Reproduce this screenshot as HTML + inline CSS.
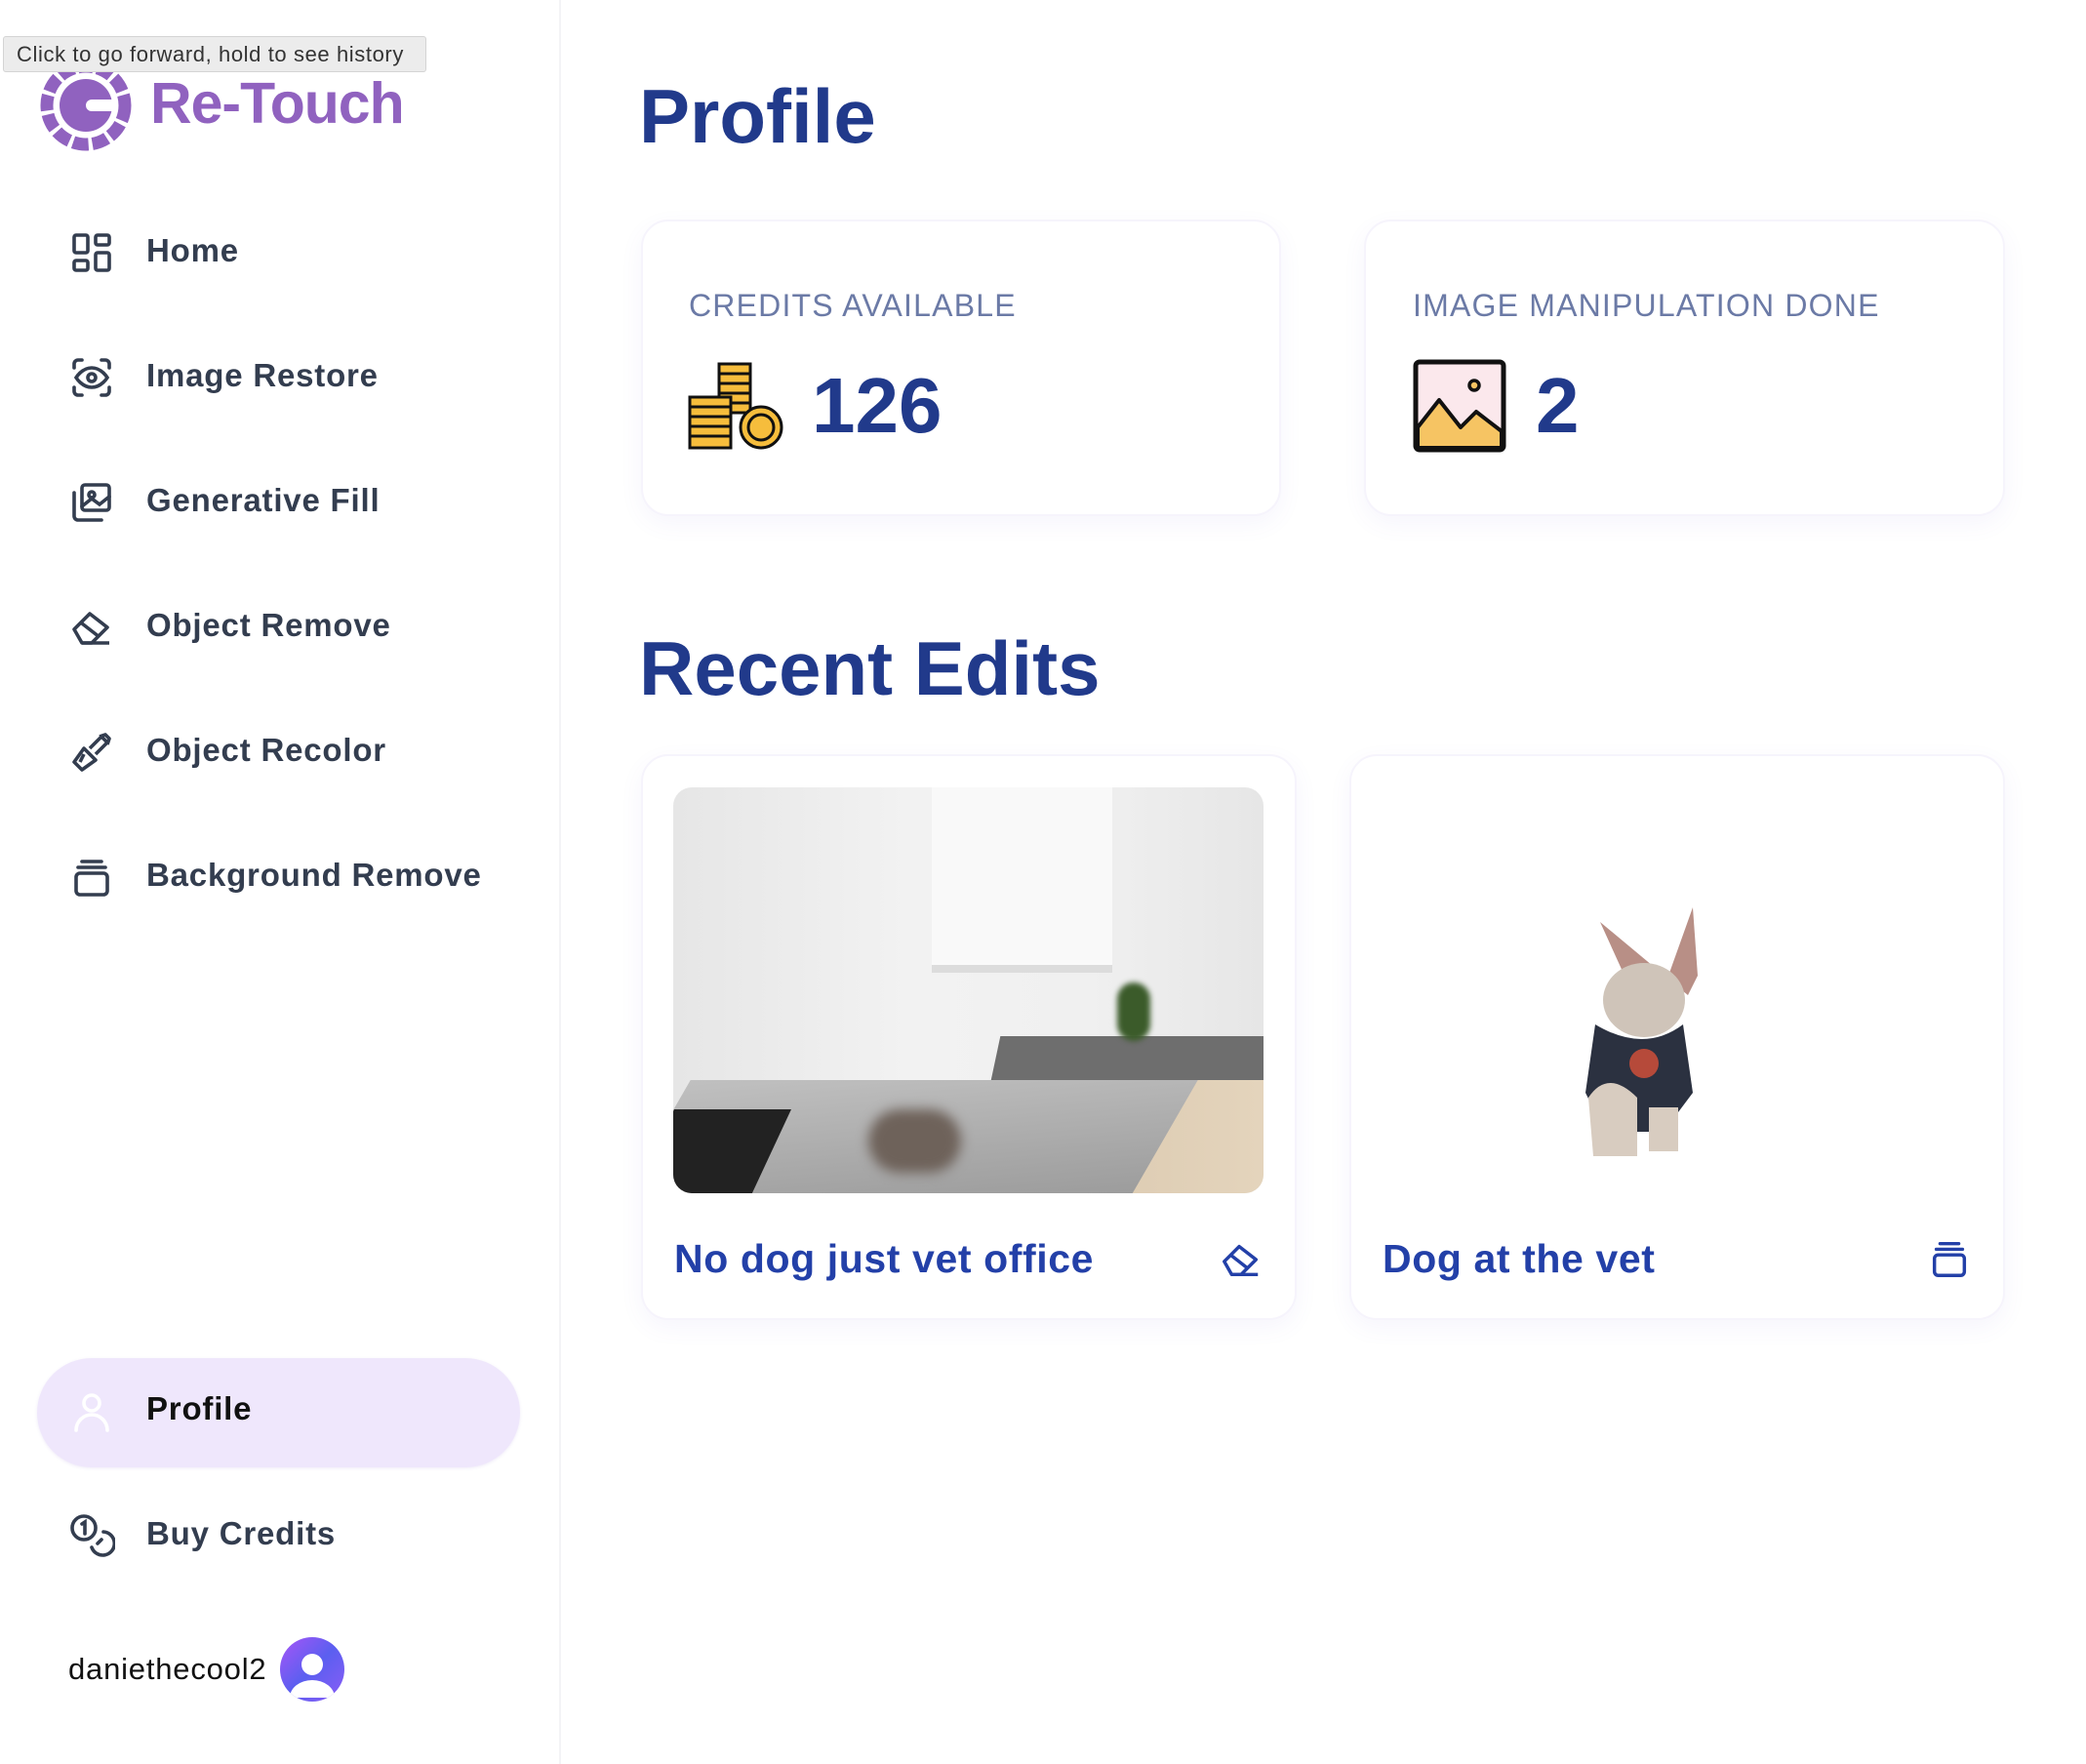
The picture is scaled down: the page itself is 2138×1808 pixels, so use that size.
<!DOCTYPE html>
<html><head><meta charset="utf-8"><style>
*{margin:0;padding:0;box-sizing:border-box}
body{width:2138px;height:1808px;background:#fff;font-family:"Liberation Sans",sans-serif;position:relative;overflow:hidden}
.side{position:absolute;left:0;top:0;width:575px;height:1808px;border-right:2px solid #f3f3f6;background:#fff}
.tip{position:absolute;left:3px;top:37px;width:434px;height:37px;background:#ececec;border:1px solid #d4d4d4;border-radius:3px;font-size:22px;color:#333;padding:5px 0 0 13px;letter-spacing:0.6px;z-index:5}
.logo{position:absolute;left:154px;top:72px;font-size:59px;font-weight:bold;color:#9062bf;letter-spacing:-1px}
.nav{position:absolute;left:0;width:575px;height:60px}
.nav svg{position:absolute;left:70px;top:7px}
.nav span{position:absolute;left:150px;top:10px;font-size:33px;font-weight:bold;color:#333d4f;letter-spacing:0.8px}
.pill{position:absolute;left:38px;top:1392px;width:495px;height:112px;background:#efe7fc;border-radius:56px;box-shadow:0 1px 3px rgba(120,90,200,.12)}
.h1{position:absolute;left:655px;font-size:78px;font-weight:bold;color:#213a8b}
.card{position:absolute;background:#fff;border-radius:28px;border:2px solid #f6f4fc;box-shadow:0 8px 24px rgba(110,90,200,.06)}
.lab{position:absolute;font-size:32px;color:#6b7aa6;letter-spacing:1.2px}
.num{position:absolute;font-size:80px;font-weight:bold;color:#213a8b}
.title{position:absolute;font-size:41px;font-weight:bold;color:#2340a8;letter-spacing:0.6px}
</style></head><body>
<div class="side">
<div class="tip">Click to go forward, hold to see history</div>
<svg style="position:absolute;left:40px;top:60px" width="96" height="96" viewBox="-48 -48 96 96">
<circle r="40" fill="none" stroke="#9062bf" stroke-width="13" stroke-dasharray="16 4"/>
<circle r="27" fill="#9062bf"/>
<rect x="0" y="-6" width="32" height="12" rx="6" fill="#fff"/>
</svg>
<div class="logo">Re‑Touch</div>

<div class="nav" style="top:228px"><svg width="48" height="48" viewBox="0 0 24 24" fill="none" stroke="#333d4f" stroke-width="1.8"><rect x="3" y="3" width="7" height="9" rx="1"/><rect x="14" y="3" width="7" height="5" rx="1"/><rect x="14" y="12" width="7" height="9" rx="1"/><rect x="3" y="16" width="7" height="5" rx="1"/></svg><span>Home</span></div>
<div class="nav" style="top:356px"><svg width="48" height="48" viewBox="0 0 24 24" fill="none" stroke="#333d4f" stroke-width="1.8" stroke-linecap="round"><path d="M3 7V5a2 2 0 0 1 2-2h2M17 3h2a2 2 0 0 1 2 2v2M21 17v2a2 2 0 0 1-2 2h-2M7 21H5a2 2 0 0 1-2-2v-2"/><path d="M4 12s3-5 8-5 8 5 8 5-3 5-8 5-8-5-8-5z"/><circle cx="12" cy="12" r="2"/></svg><span>Image Restore</span></div>
<div class="nav" style="top:484px"><svg width="48" height="48" viewBox="0 0 24 24" fill="none" stroke="#333d4f" stroke-width="1.8" stroke-linecap="round"><rect x="7" y="3" width="14" height="13" rx="1.5"/><path d="M3 7v12a2 2 0 0 0 2 2h12"/><circle cx="12" cy="8" r="1.5"/><path d="M7 14l5-4 4 3 5-4"/></svg><span>Generative Fill</span></div>
<div class="nav" style="top:612px"><svg width="48" height="48" viewBox="0 0 24 24" fill="none" stroke="#333d4f" stroke-width="1.8" stroke-linejoin="round"><path d="M3 13l8-8 9 7-8 8H7z"/><path d="M7 20h14M7 10l9 7"/></svg><span>Object Remove</span></div>
<div class="nav" style="top:740px"><svg width="48" height="48" viewBox="0 0 24 24" fill="none" stroke="#333d4f" stroke-width="1.8" stroke-linejoin="round"><path d="M3 17l5-7 6 6-7 5z"/><path d="M11 10l6-6 3 3-6 6M16 4l3-1 2 2-1 3M8 13l-2 4"/></svg><span>Object Recolor</span></div>
<div class="nav" style="top:868px"><svg width="48" height="48" viewBox="0 0 24 24" fill="none" stroke="#333d4f" stroke-width="1.8" stroke-linecap="round"><rect x="4" y="10" width="16" height="11" rx="2"/><path d="M5 7h14M7 4h10"/></svg><span>Background Remove</span></div>

<div class="pill"></div>
<div class="nav" style="top:1415px"><svg width="48" height="48" viewBox="0 0 24 24" fill="none" stroke="#fff" stroke-width="1.8" stroke-linecap="round"><circle cx="12" cy="8" r="4"/><path d="M4 22a8 8 0 0 1 16 0"/></svg><span style="color:#111">Profile</span></div>
<div class="nav" style="top:1543px"><svg width="48" height="48" viewBox="0 0 24 24" fill="none" stroke="#333d4f" stroke-width="1.8" stroke-linecap="round"><circle cx="8" cy="8" r="6"/><path d="M7 6l1.5-1v6"/><path d="M18 10a6 6 0 1 1-6 8"/><path d="M15 16l2-2"/></svg><span>Buy Credits</span></div>
<div style="position:absolute;left:70px;top:1693px;font-size:31px;color:#111;letter-spacing:0.8px">daniethecool2</div>
<svg style="position:absolute;left:287px;top:1678px" width="66" height="66" viewBox="0 0 66 66"><defs><linearGradient id="g" x1="0" y1="0" x2="1" y2="1"><stop offset="0" stop-color="#a855f7"/><stop offset=".5" stop-color="#5b5ff0"/><stop offset="1" stop-color="#8b5cf6"/></linearGradient><clipPath id="c"><circle cx="33" cy="33" r="33"/></clipPath></defs><circle cx="33" cy="33" r="33" fill="url(#g)"/><circle cx="33" cy="28" r="11" fill="#fff"/><path d="M10 62a23 18 0 0 1 46 0z" fill="#fff" clip-path="url(#c)"/></svg>
</div>

<div class="h1" style="top:74px">Profile</div>
<div class="card" style="left:657px;top:225px;width:656px;height:304px"></div>
<div class="card" style="left:1398px;top:225px;width:657px;height:304px"></div>
<div class="lab" style="left:706px;top:295px">CREDITS AVAILABLE</div>
<div class="lab" style="left:1448px;top:295px">IMAGE MANIPULATION DONE</div>
<svg style="position:absolute;left:705px;top:371px" width="98" height="92" viewBox="0 0 98 92" stroke="#111" stroke-width="3">
<rect x="32" y="2" width="32" height="50" fill="#f6bd3c"/><path d="M32 12h32M32 22h32M32 32h32M32 42h32"/>
<rect x="2" y="36" width="42" height="52" fill="#f6bd3c"/><path d="M2 46h42M2 56h42M2 66h42M2 76h42"/>
<circle cx="75" cy="67" r="21" fill="#f6bd3c"/><circle cx="75" cy="67" r="13" fill="none"/></svg>
<div class="num" style="left:832px;top:370px">126</div>
<svg style="position:absolute;left:1448px;top:368px" width="96" height="96" viewBox="0 0 96 96"><rect x="3" y="3" width="90" height="90" rx="4" fill="#fbe8ec" stroke="#111" stroke-width="5"/><path d="M5 70l22-28 22 28 16-16 26 20v17H5z" fill="#f6c463" stroke="#111" stroke-width="4" stroke-linejoin="round"/><circle cx="63" cy="27" r="5" fill="#f6c463" stroke="#111" stroke-width="3.5"/></svg>
<div class="num" style="left:1574px;top:370px">2</div>

<div class="h1" style="top:640px">Recent Edits</div>
<div class="card" style="left:657px;top:773px;width:672px;height:580px"></div>
<div class="card" style="left:1383px;top:773px;width:672px;height:580px"></div>
<div style="position:absolute;left:690px;top:807px;width:605px;height:416px;border-radius:19px;overflow:hidden;background:linear-gradient(90deg,#e6e6e6,#f2f2f2 40%,#f0f0f0 70%,#e6e6e6)">
<div style="position:absolute;left:265px;top:0;width:185px;height:190px;background:#f9f9f9;border-bottom:8px solid #dcdcdc"></div>
<div style="position:absolute;left:330px;top:255px;width:280px;height:50px;background:#6e6e6e;transform:skewX(-12deg)"></div>
<div style="position:absolute;left:340px;top:300px;width:265px;height:120px;background:linear-gradient(90deg,#d9c7ad,#e4d4bc)"></div>
<div style="position:absolute;left:455px;top:200px;width:34px;height:60px;background:#3b5b2a;border-radius:17px;filter:blur(3px)"></div>
<div style="position:absolute;left:-40px;top:300px;width:520px;height:200px;background:linear-gradient(175deg,#c0c0c0,#8a8a8a);transform:skewX(-30deg)"></div>
<div style="position:absolute;left:-20px;top:330px;width:120px;height:90px;background:#222;transform:skewX(-25deg)"></div>
<div style="position:absolute;left:200px;top:330px;width:95px;height:65px;background:#6e625a;border-radius:40px;filter:blur(6px)"></div>
</div>
<svg style="position:absolute;left:1600px;top:915px" width="170" height="270" viewBox="0 0 170 270">
<path d="M40 30l25 55 45 0 25-70 5 70-10 20z" fill="#b88f86"/>
<ellipse cx="85" cy="110" rx="42" ry="38" fill="#cfc4b9"/>
<path d="M35 135q50 30 90 0l10 70-30 40h-60l-20-40z" fill="#2b3140"/>
<path d="M28 210q20-30 50 0l0 60h-45z" fill="#d8ccc0"/><path d="M90 220h30v45h-30z" fill="#d8ccc0"/>
<circle cx="85" cy="175" r="15" fill="#b64a3a"/></svg>
<div class="title" style="left:691px;top:1267px">No dog just vet office</div>
<svg style="position:absolute;left:1248px;top:1268px" width="48" height="46" viewBox="0 0 24 24" fill="none" stroke="#2340a8" stroke-width="1.8" stroke-linejoin="round"><path d="M3 13l8-8 9 7-8 8H7z"/><path d="M7 20h14M7 10l9 7"/></svg>
<div class="title" style="left:1417px;top:1267px">Dog at the vet</div>
<svg style="position:absolute;left:1975px;top:1266px" width="46" height="48" viewBox="0 0 24 24" fill="none" stroke="#2340a8" stroke-width="1.8" stroke-linecap="round"><rect x="4" y="10" width="16" height="11" rx="2"/><path d="M5 7h14M7 4h10"/></svg>
</body></html>
